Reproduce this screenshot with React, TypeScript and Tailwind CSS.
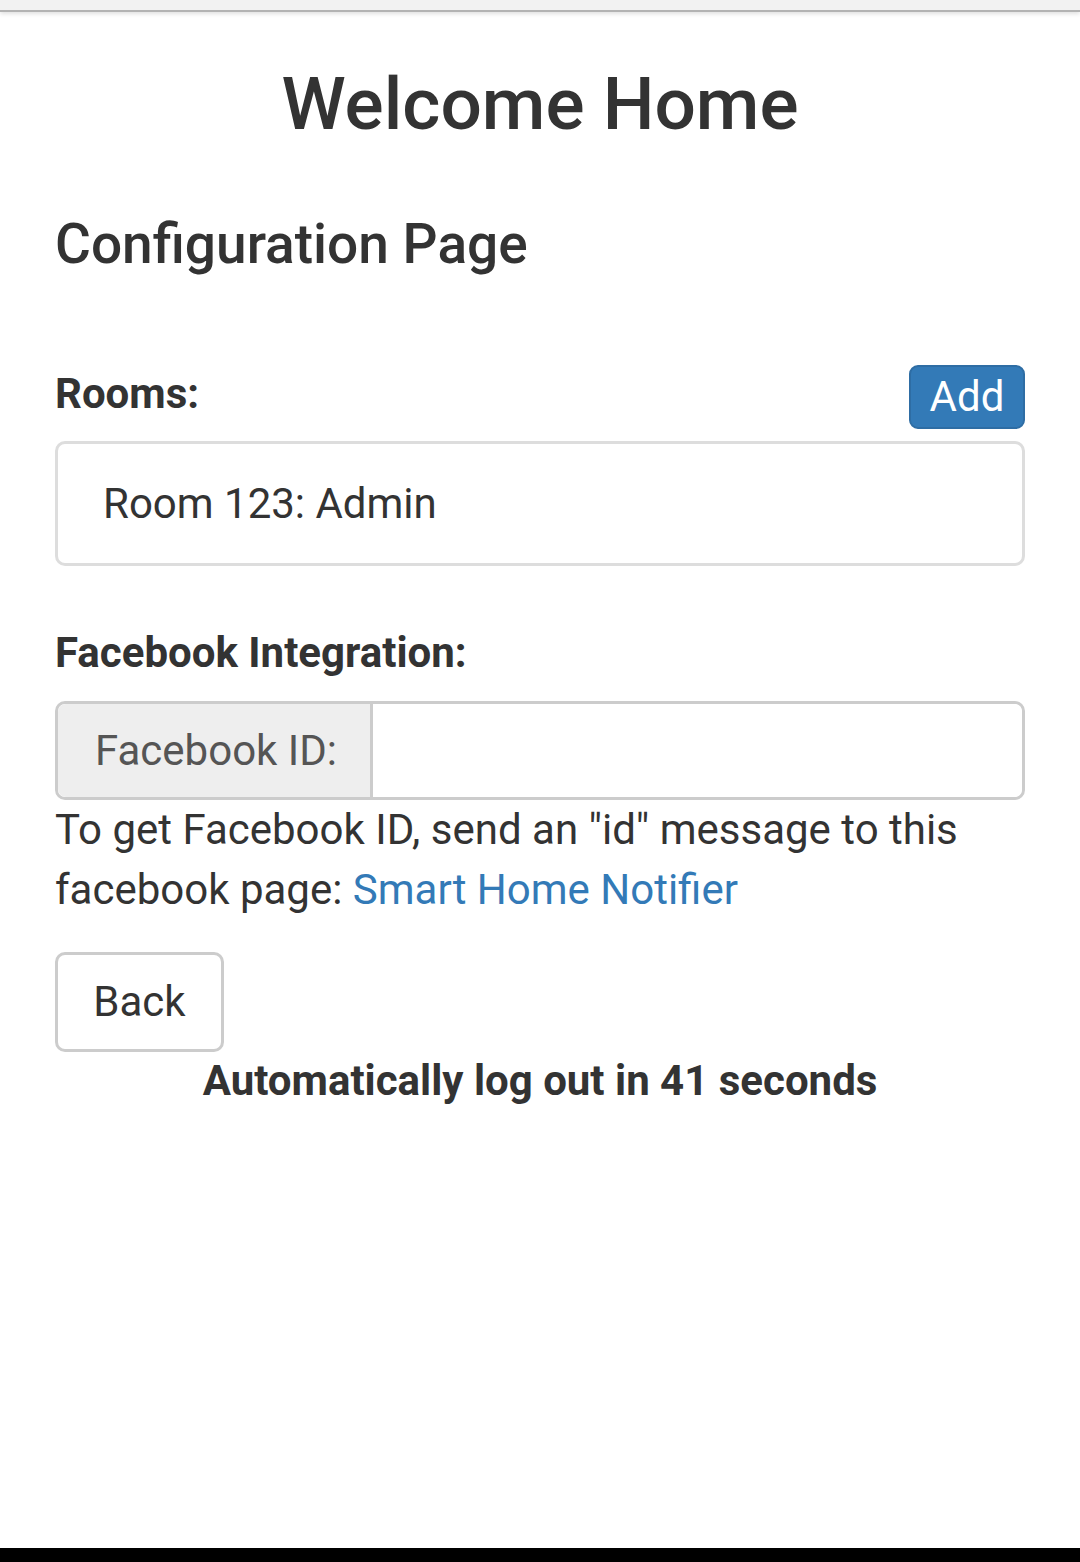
export default function App() {
  return (
    <div className="flex min-h-[1562px] flex-col bg-white text-[#333] font-['Roboto',sans-serif]">
      <div className="h-[12px] border-b-2 border-[#b3b3b3] bg-[#f2f2f2] shadow-[0_2px_4px_rgba(0,0,0,0.12)]" />
      <div className="flex flex-1 flex-col px-[55px]">
        <h1 className="mt-[56px] text-center text-[73px] font-medium leading-none">Welcome Home</h1>
        <h2 className="mt-[76px] text-[55px] font-medium leading-none">Configuration Page</h2>

        <div className="mt-[93px] flex items-start justify-between">
          <span className="mt-[8px] text-[42px] font-bold leading-none">Rooms:</span>
          <button className="h-[64px] w-[116px] rounded-[9px] border-2 border-[#2e6da4] bg-[#337ab7] text-[42px] leading-none text-white">
            Add
          </button>
        </div>
        <div className="mt-[12px] flex h-[125px] items-center rounded-[10px] border-[3px] border-[#ddd] px-[45px]">
          <span className="text-[42px] leading-none">Room 123: Admin</span>
        </div>

        <span className="mt-[66px] text-[42px] font-bold leading-none">Facebook Integration:</span>
        <div className="mt-[27px] flex h-[99px] rounded-[10px] border-[3px] border-[#ccc]">
          <div className="flex w-[315px] items-center rounded-l-[8px] border-r-[3px] border-[#ccc] bg-[#eee] pl-[37px] text-[42px] leading-none text-[#555]">
            Facebook ID:
          </div>
          <div className="flex-1 rounded-r-[8px] bg-white" />
        </div>
        <p className="text-[42px] leading-[60px]">
          To get Facebook ID, send an "id" message to this facebook page:{" "}
          <a href="#" className="text-[#337ab7]">Smart Home Notifier</a>
        </p>

        <div className="mt-[32px]">
          <button className="h-[100px] w-[169px] rounded-[10px] border-[3px] border-[#ccc] bg-white text-[42px] leading-none text-[#333]">
            Back
          </button>
        </div>
        <p className="mt-[8px] text-center text-[42px] font-bold leading-none">Automatically log out in 41 seconds</p>
      </div>
      <div className="h-[14px] bg-black" />
    </div>
  );
}
